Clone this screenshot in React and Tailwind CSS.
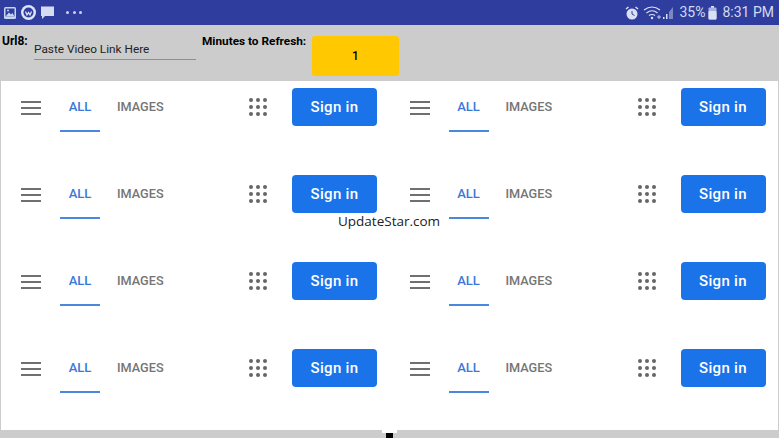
const sans = { fontFamily: "Roboto, 'Liberation Sans', sans-serif" };

function GoogleBar() {
  return (
    <div className="h-[87px] flex items-start" style={sans}>
      <div className="ml-[20px] mt-[20px] w-[20px] flex flex-col gap-[4px] shrink-0">
        <div className="h-[2px] bg-[#707070]" />
        <div className="h-[2px] bg-[#707070]" />
        <div className="h-[2px] bg-[#707070]" />
      </div>
      <div className="ml-[19px] w-[40px] h-[51px] border-b-2 border-[#4a88e0] shrink-0 text-center pt-[18px] text-[13px] leading-[16px] font-medium text-[#3b78d8]">
        ALL
      </div>
      <div className="ml-[17px] w-[60px] pt-[18px] text-[12.7px] leading-[16px] font-medium text-[#757575] shrink-0">
        IMAGES
      </div>
      <svg className="ml-[72px] mt-[17px] shrink-0" width="18" height="18" viewBox="0 0 18 18" fill="#666">
        {[2, 9, 16].flatMap((y) =>
          [2, 9, 16].map((x) => <circle key={`${x}-${y}`} cx={x} cy={y} r="2" />)
        )}
      </svg>
      <button className="ml-[25px] mt-[7px] w-[85px] h-[38px] rounded-[4px] bg-[#1a73e8] text-white text-[15px] font-medium tracking-[0.3px] shrink-0">
        Sign in
      </button>
    </div>
  );
}

export default function App() {
  return (
    <div className="w-[779px] h-[438px] relative overflow-hidden bg-[#cccccc] flex flex-col" style={sans}>
      <div className="h-[25px] bg-[#2f3e9e] flex items-center justify-between pl-[3px] pr-[5px] shrink-0">
        <div className="flex items-center gap-[3px]">
          <svg width="14" height="14" viewBox="0 0 14 14">
            <rect x="1" y="1" width="12" height="12" rx="1.5" fill="#c9d4ee" />
            <rect x="2.5" y="2.5" width="9" height="8" fill="#2f3e9e" />
            <path d="M2.5 10.5 L6 6.5 L8 8.5 L9.5 7 L11.5 10.5 Z" fill="#c9d4ee" />
            <circle cx="5" cy="4.5" r="1" fill="#c9d4ee" />
          </svg>
          <svg width="17" height="17" viewBox="0 0 17 17">
            <circle cx="8.5" cy="8.5" r="7.5" fill="#dfe5f5" />
            <circle cx="8.5" cy="8.5" r="5" fill="#2f3e9e" />
            <path d="M5.5 7.5 L7 11 L8.5 8.5 L10 11 L11.5 7.5" fill="none" stroke="#dfe5f5" strokeWidth="1.2" />
          </svg>
          <svg width="15" height="15" viewBox="0 0 15 15">
            <path d="M1 1.5 H14 V11 H5 L2 14 V11 H1 Z" fill="#d5dcf2" />
          </svg>
          <div className="ml-[8px] flex gap-[3.5px]">
            <div className="w-[3px] h-[3px] rounded-full bg-[#c9d4ee]" />
            <div className="w-[3px] h-[3px] rounded-full bg-[#c9d4ee]" />
            <div className="w-[3px] h-[3px] rounded-full bg-[#c9d4ee]" />
          </div>
        </div>
        <div className="flex items-center text-[14px] text-[#d3daf0]">
          <svg width="14" height="14" viewBox="0 0 14 14" className="mr-[4px]">
            <circle cx="7" cy="8" r="5.5" fill="#dbe1f4" />
            <path d="M7 5 V8 L9.5 9.5" fill="none" stroke="#2f3e9e" strokeWidth="1" />
            <path d="M1 3 L3.5 1 M13 3 L10.5 1" stroke="#dbe1f4" strokeWidth="1.5" />
          </svg>
          <svg width="31" height="15" viewBox="0 0 31 15" className="mr-[5px]">
            <path d="M1 5 Q9 -1 17 5 M3.5 8 Q9 3.5 14.5 8 M6 10.5 Q9 8.5 12 10.5" fill="none" stroke="#dbe1f4" strokeWidth="1.2" />
            <circle cx="9" cy="13" r="1.2" fill="#dbe1f4" />
            <path d="M14 12 H18 M16 10 V14" stroke="#dbe1f4" strokeWidth="0.8" />
            <path d="M20 14 H21.5 V12 H20 Z M23 14 H24.5 V9 H23 Z" fill="#dbe1f4" />
            <path d="M26 14 H30 V2 L26 7 Z" fill="#7c88c4" />
          </svg>
          <span className="mr-[3px]">35%</span>
          <svg width="9" height="14" viewBox="0 0 9 14" className="mr-[5px]">
            <rect x="3" y="0" width="3" height="2" fill="#dbe1f4" />
            <rect x="0.5" y="1.5" width="8" height="12" rx="1" fill="#a9b2dc" />
            <rect x="0.5" y="5" width="8" height="8.5" rx="1" fill="#dbe1f4" />
          </svg>
          <span>8:31 PM</span>
        </div>
      </div>

      <div className="h-[56px] flex items-start shrink-0 text-black">
        <div className="ml-[2px] mt-[9px] w-[32px] text-[12px] leading-[14px] font-bold">Url8:</div>
        <div className="w-[162px] mt-[18px] flex flex-col">
          <div className="h-[16px] text-[11.8px] leading-[13px] text-[#222]">Paste Video Link Here</div>
          <div className="h-[1px] bg-[#e8608c]" />
        </div>
        <div className="ml-[6px] mt-[9px] w-[110px] text-[11.8px] leading-[14px] font-bold whitespace-nowrap">
          Minutes to Refresh:
        </div>
        <div className="mt-[11px] w-[87px] h-[40px] rounded-[3px] bg-[#ffc800] flex items-center justify-center text-[12px] font-medium">
          1
        </div>
      </div>

      <div className="mx-px h-[349px] bg-white grid grid-cols-2 content-start shrink-0">
        {Array.from({ length: 8 }).map((_, i) => (
          <GoogleBar key={i} />
        ))}
      </div>

      <div className="absolute left-[338px] top-[211px] text-[13.5px] leading-[20px] text-[#222]" style={{ fontFamily: "'Open Sans', sans-serif" }}>
        UpdateStar.com
      </div>

      <div className="absolute left-[382px] top-[430px] w-[15px] h-[3px] bg-white" />
      <div className="absolute left-[386px] top-[433px] w-[7px] h-[5px] bg-black" />
    </div>
  );
}
